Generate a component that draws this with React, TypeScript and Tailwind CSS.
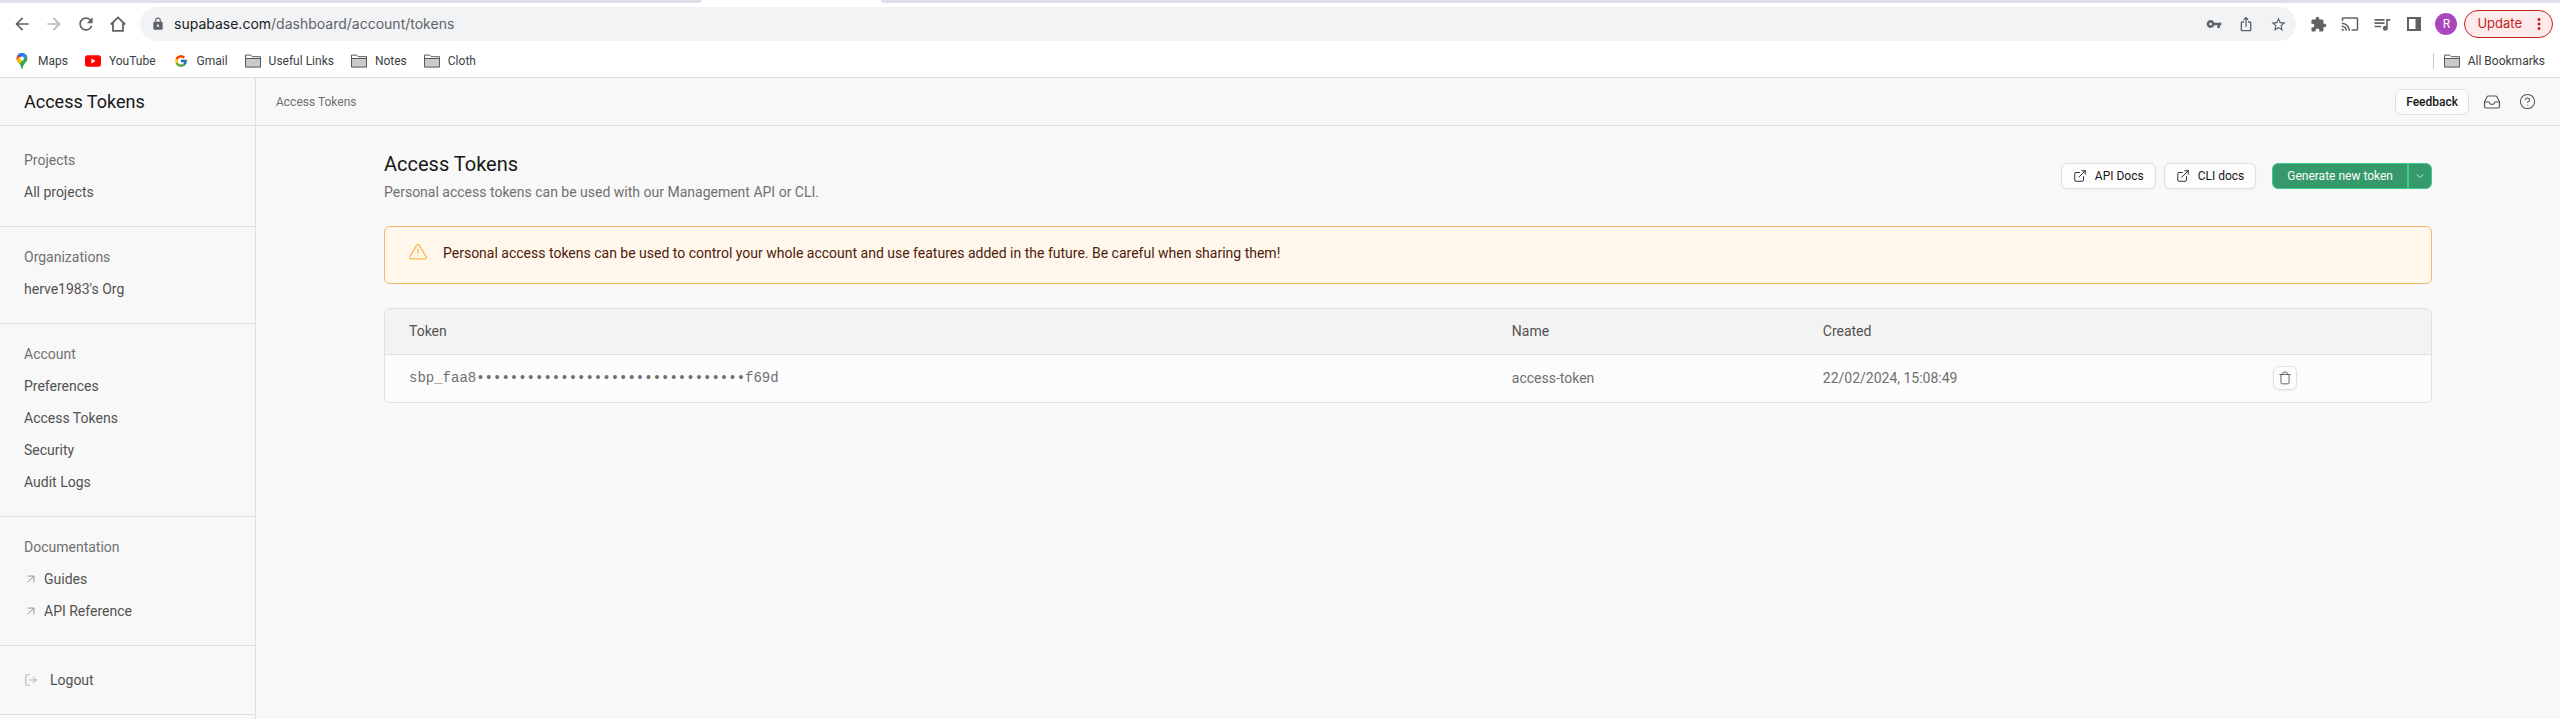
import React from "react";
import {
  MdArrowBack,
  MdArrowForward,
  MdRefresh,
  MdLock,
  MdVpnKey,
  MdIosShare,
  MdStarBorder,
  MdExtension,
  MdCast,
  MdQueueMusic,
  MdMoreVert,
} from "react-icons/md";
import { FcGoogle } from "react-icons/fc";
import { ArrowUpRight, ChevronDown, CircleHelp, ExternalLink, Inbox, LogOut, Trash } from "lucide-react";

function FolderIcon() {
  return (
    <svg width="16" height="16" viewBox="0 0 16 16" fill="none" aria-hidden="true">
      <path d="M.5 2.2h5.2l1.4 1.6h8.4v10.3H.5z" fill="#fff" />
      <path d="M.5 5.5h15v8.6H.5z" fill="#cacaca" />
      <path d="M.5 2.1h5.2l1.5 1.6h8.3v10.4H.5zM.5 5.5h15" stroke="#55585c" />
    </svg>
  );
}

function MapsIcon() {
  return (
    <svg width="16" height="16" viewBox="0 0 16 16" aria-hidden="true">
      <defs>
        <clipPath id="pin">
          <path d="M8 0a5.4 5.4 0 0 0-5.4 5.4c0 1.700.7 2.900 1.800 4.200C5.800 11.200 7 12.500 7.300 15.200c.1.500.3.800.7.800s.600-.3.700-.8c.3-2.700 1.500-4 2.900-5.600 1.100-1.300 1.800-2.500 1.800-4.200A5.400 5.400 0 0 0 8 0z" />
        </clipPath>
      </defs>
      <g clipPath="url(#pin)">
        <path d="M0 0h16v16H0z" fill="#34a853" />
        <path d="M0 0h16v3L8 5.400z" fill="#1a73e8" />
        <path d="M6.500 0H14l-1 2.500L8 7.500z" fill="#4285f4" />
        <path d="M1 0h3l5 4.500-5 5L2 7z" fill="#ea4335" />
        <path d="M6.300 0H9L8 5 4 2.200z" fill="#1a73e8" />
        <path d="M2 6.800 5.600 3.900 10 6.500 4.600 11.500z" fill="#fbbc04" />
      </g>
      <circle cx="8" cy="5.400" r="2" fill="#fff" />
    </svg>
  );
}

function YouTubeIcon() {
  return (
    <svg width="16" height="16" viewBox="0 0 16 16" aria-hidden="true">
      <rect y="2.300" width="16" height="11.400" rx="2.600" fill="#f00" />
      <path d="M6.400 5.600v4.800L10.600 8z" fill="#fff" />
    </svg>
  );
}

const bookmarks = [
  { label: "Maps", icon: <MapsIcon /> },
  { label: "YouTube", icon: <YouTubeIcon /> },
  { label: "Gmail", icon: <FcGoogle size={14} /> },
  { label: "Useful Links", icon: <FolderIcon /> },
  { label: "Notes", icon: <FolderIcon /> },
  { label: "Cloth", icon: <FolderIcon /> },
];

function ToolButton({ label, children }: { label: string; children: React.ReactNode }) {
  return (
    <button type="button" aria-label={label} className="flex size-8 items-center justify-center">
      {children}
    </button>
  );
}

function Bookmark({ label, icon }: { label: string; icon: React.ReactNode }) {
  return (
    <a href="#" className="flex items-center gap-2">
      <span className="flex size-4 items-center justify-center">{icon}</span>
      {label}
    </a>
  );
}

function BrowserChrome() {
  return (
    <div className="border-b border-[#dadce0] bg-white font-['Roboto',sans-serif]">
      <div className="flex h-[3px]">
        <div className="w-[702px] rounded-br bg-[#dfdfe8]" />
        <div className="w-[179px]" />
        <div className="flex-1 rounded-bl bg-[#dfdfe8]" />
      </div>
      <div className="flex items-center pt-1 pr-[7px] pl-1.5 text-[#5f6368]">
        <ToolButton label="Back"><MdArrowBack size={20} /></ToolButton>
        <span className="text-[#b8babd]">
          <ToolButton label="Forward"><MdArrowForward size={20} /></ToolButton>
        </span>
        <ToolButton label="Reload"><MdRefresh size={20} /></ToolButton>
        <ToolButton label="Home">
          <svg width="16" height="16" viewBox="0 0 16 16" fill="none" stroke="currentColor" strokeWidth="1.800">
            <path d="M.8 8.500 8 1.400l7.200 7.100M3 7v7.900h10V7" />
          </svg>
        </ToolButton>
        <div className="ml-1.5 flex h-[34px] flex-1 items-center rounded-full bg-[#f1f3f4] pr-0.5 pl-2.5">
          <span className="flex size-4 items-center justify-center"><MdLock size={14} /></span>
          <a href="#" className="ml-2 flex-1 font-['Inter',sans-serif] text-sm text-[#5f6368]">
            <span className="text-[#202124]">supabase.com</span>/dashboard/account/tokens
          </a>
          <ToolButton label="Passwords"><MdVpnKey size={16} /></ToolButton>
          <ToolButton label="Share"><MdIosShare size={16} /></ToolButton>
          <ToolButton label="Bookmark this tab"><MdStarBorder size={17} /></ToolButton>
        </div>
        <div className="ml-1.5 flex items-center">
          <ToolButton label="Extensions"><MdExtension size={17} /></ToolButton>
          <ToolButton label="Cast"><MdCast size={18} /></ToolButton>
          <ToolButton label="Media"><MdQueueMusic size={20} /></ToolButton>
          <ToolButton label="Side panel">
            <svg width="14" height="14" viewBox="0 0 14 14" aria-hidden="true">
              <path d="M0 0h14v14H0zM2 2v10h6.500V2z" fill="currentColor" fillRule="evenodd" />
            </svg>
          </ToolButton>
          <ToolButton label="Profile">
            <span className="flex size-[22px] items-center justify-center rounded-full bg-[#ab47bc] text-xs text-white">R</span>
          </ToolButton>
        </div>
        <button
          type="button"
          className="ml-0.5 flex h-7 items-center gap-2 rounded-full border border-[#c5221f] bg-[#fcebea] pr-1 pl-3 font-['Inter',sans-serif] text-[13px] text-[#c5221f]"
        >
          Update
          <MdMoreVert size={18} />
        </button>
      </div>
      <div className="flex h-9 items-center justify-between pt-1 pr-[15px] pl-3.5 text-xs text-[#3c4043]">
        <nav aria-label="Bookmarks" className="flex items-center gap-[17px]">
          {bookmarks.map((b) => (
            <Bookmark key={b.label} {...b} />
          ))}
        </nav>
        <div className="flex items-center gap-2.5">
          <span className="h-4 w-px bg-[#c8cacd]" />
          <Bookmark label="All Bookmarks" icon={<FolderIcon />} />
        </div>
      </div>
    </div>
  );
}

function Section({ title, children }: { title?: string; children: React.ReactNode }) {
  return (
    <section className="border-b border-[#dfdfdf] px-6 pt-3.5 pb-[18px]">
      {title && <h2 className="leading-8 text-[#707070]">{title}</h2>}
      <ul>{children}</ul>
    </section>
  );
}

function Item({ label, external }: { label: string; external?: boolean }) {
  return (
    <li>
      <a href="#" className="flex h-8 items-center gap-1.5">
        {external && (
          <span className="flex w-3.5 justify-end text-[#8a8a8a]">
            <ArrowUpRight size={14} strokeWidth={1.5} />
          </span>
        )}
        {label}
      </a>
    </li>
  );
}

function Sidebar() {
  return (
    <aside className="w-64 shrink-0 border-r border-[#dfdfdf] text-sm text-[#525252]">
      <div className="flex h-12 items-center border-b border-[#dfdfdf] px-6">
        <h1 className="text-lg text-[#171717]">Access Tokens</h1>
      </div>
      <nav>
        <div className="pt-1">
          <Section title="Projects">
            <Item label="All projects" />
          </Section>
        </div>
        <Section title="Organizations">
          <Item label="herve1983's Org" />
        </Section>
        <Section title="Account">
          <Item label="Preferences" />
          <Item label="Access Tokens" />
          <Item label="Security" />
          <Item label="Audit Logs" />
        </Section>
        <Section title="Documentation">
          <Item label="Guides" external />
          <Item label="API Reference" external />
        </Section>
        <div className="border-b border-[#dfdfdf] px-6 py-[18px]">
          <button type="button" className="flex h-8 items-center gap-3">
            <LogOut size={14} strokeWidth={1.5} className="text-[#a3a3a3]" />
            Logout
          </button>
        </div>
      </nav>
    </aside>
  );
}

const outlineButton =
  "flex h-[26px] items-center rounded-md border border-[#dfdfdf] bg-[#fdfdfd] text-xs text-[#171717]";

function TopBar() {
  return (
    <header className="flex h-12 items-center justify-between border-b border-[#dfdfdf] pr-6 pl-5">
      <a href="#" className="text-xs text-[#707070]">Access Tokens</a>
      <div className="flex items-center text-[#525252]">
        <button type="button" className={outlineButton + " px-2.5 font-medium"}>Feedback</button>
        <button type="button" aria-label="Inbox" className="ml-3.5">
          <Inbox size={18} strokeWidth={1.5} />
        </button>
        <button type="button" aria-label="Help" className="ml-[18px]">
          <CircleHelp size={17} strokeWidth={1.5} />
        </button>
      </div>
    </header>
  );
}

function DocsLink({ label }: { label: string }) {
  return (
    <a href="#" className={outlineButton + " gap-2 px-[11px] shadow-xs"}>
      <ExternalLink size={14} strokeWidth={1.5} />
      {label}
    </a>
  );
}

function TokensPage() {
  return (
    <div className="px-32 py-6">
      <div className="flex items-start justify-between">
        <div>
          <h2 className="text-xl leading-7 text-[#171717]">Access Tokens</h2>
          <p className="pt-1 text-sm text-[#707070]">
            Personal access tokens can be used with our Management API or CLI.
          </p>
        </div>
        <div className="flex items-center gap-4 pt-[13px]">
          <div className="flex items-center gap-2">
            <DocsLink label="API Docs" />
            <DocsLink label="CLI docs" />
          </div>
          <div className="flex h-[26px] rounded-md border border-[#3ecf8e] bg-[#35996b] text-xs text-white">
            <button type="button" className="px-3.5">Generate new token</button>
            <button
              type="button"
              aria-label="More token options"
              className="flex w-6 items-center justify-center border-l-2 border-[#3ecf8e]"
            >
              <ChevronDown size={12} strokeWidth={1.5} />
            </button>
          </div>
        </div>
      </div>

      <div
        role="alert"
        className="mt-6 flex h-[58px] gap-4 rounded-md border border-[#f3b766] bg-[#fff7ec] px-6 py-4 text-sm text-[#4e2009]"
      >
        <svg
          width="18"
          height="18"
          viewBox="0 0 18 18"
          fill="none"
          stroke="#ffb84d"
          strokeWidth="1.300"
          strokeLinecap="round"
          strokeLinejoin="round"
          aria-hidden="true"
        >
          <path d="M7.800 2.200.9 13.700a1.400 1.400 0 0 0 1.200 2.100h13.800a1.400 1.400 0 0 0 1.200-2.100L10.200 2.200a1.400 1.400 0 0 0-2.400 0zM9 6.300v4M9 12.900v.1" />
        </svg>
        <p>
          Personal access tokens can be used to control your whole account and use features added in the future. Be
          careful when sharing them!
        </p>
      </div>

      <div className="mt-6 overflow-hidden rounded-md border border-[#dfdfdf] bg-[#fcfcfc]">
        <table className="w-full table-fixed text-left text-sm text-[#707070]">
          <thead className="bg-[#f3f3f3] text-[#525252]">
            <tr className="h-[45px] border-b border-[#dfdfdf]">
              <th scope="col" className="w-[53.9%] px-6 font-normal">Token</th>
              <th scope="col" className="w-[15.2%] px-6 font-normal">Name</th>
              <th scope="col" className="w-[22%] px-6 font-normal">Created</th>
              <th scope="col" aria-label="Actions" />
            </tr>
          </thead>
          <tbody>
            <tr className="h-12">
              <td className="px-6 font-['Liberation_Mono',monospace]">sbp_faa8••••••••••••••••••••••••••••••••f69d</td>
              <td className="px-6">access-token</td>
              <td className="px-6">22/02/2024, 15:08:49</td>
              <td className="px-6">
                <button
                  type="button"
                  aria-label="Delete token"
                  className="flex size-6 items-center justify-center rounded-md border border-[#dfdfdf] bg-[#fdfdfd] text-[#525252] shadow-xs"
                >
                  <Trash size={14} strokeWidth={1.5} />
                </button>
              </td>
            </tr>
          </tbody>
        </table>
      </div>
    </div>
  );
}

export default function App() {
  return (
    <div className="flex min-h-screen flex-col bg-[#f8f8f8] font-['Roboto',sans-serif]">
      <BrowserChrome />
      <div className="flex flex-1">
        <Sidebar />
        <main className="min-w-0 flex-1">
          <TopBar />
          <TokensPage />
        </main>
      </div>
    </div>
  );
}
